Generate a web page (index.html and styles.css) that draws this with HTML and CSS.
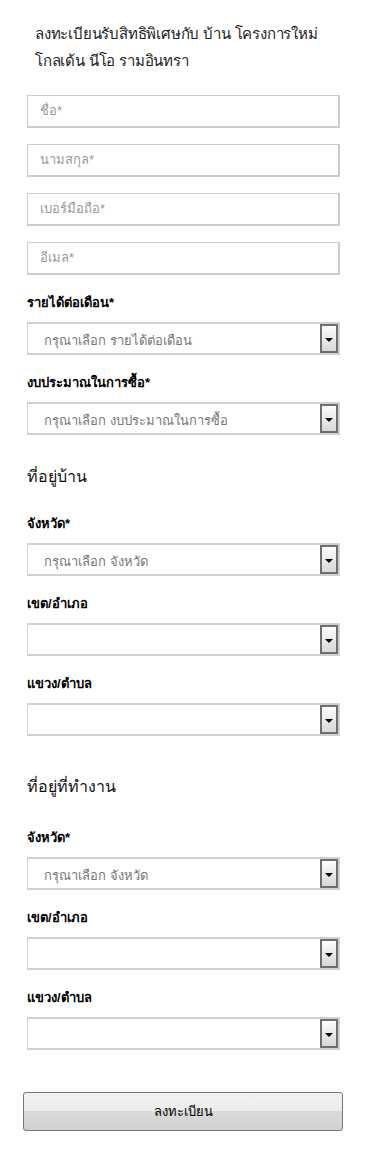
FILE: index.html
```html
<!DOCTYPE html>
<html>
<head>
<meta name="viewport" content="width=device-width, initial-scale=1">
<link rel="stylesheet" href="styles.css">
</head>
<body>

<div class="container">
  <h2 class="title">ลงทะเบียนรับสิทธิพิเศษกับ บ้าน โครงการใหม่ โกลเด้น นีโอ รามอินทรา</h2>

  <form>
    <div class="field"><div class="input">ชื่อ*</div></div>
    <div class="field"><div class="input">นามสกุล*</div></div>
    <div class="field"><div class="input">เบอร์มือถือ*</div></div>
    <div class="field"><div class="input">อีเมล*</div></div>

    <label class="label">รายได้ต่อเดือน*</label>
    <div class="select"><span class="value">กรุณาเลือก รายได้ต่อเดือน</span><span class="arrow"></span></div>

    <label class="label">งบประมาณในการซื้อ*</label>
    <div class="select"><span class="value">กรุณาเลือก งบประมาณในการซื้อ</span><span class="arrow"></span></div>

    <div class="section">
      <h3 class="heading">ที่อยู่บ้าน</h3>
      <label class="label">จังหวัด*</label>
      <div class="select"><span class="value">กรุณาเลือก จังหวัด</span><span class="arrow"></span></div>
      <label class="label">เขต/อำเภอ</label>
      <div class="select"><span class="value"></span><span class="arrow"></span></div>
      <label class="label">แขวง/ตำบล</label>
      <div class="select"><span class="value"></span><span class="arrow"></span></div>
    </div>

    <div class="section">
      <h3 class="heading">ที่อยู่ที่ทำงาน</h3>
      <label class="label">จังหวัด*</label>
      <div class="select"><span class="value">กรุณาเลือก จังหวัด</span><span class="arrow"></span></div>
      <label class="label">เขต/อำเภอ</label>
      <div class="select"><span class="value"></span><span class="arrow"></span></div>
      <label class="label">แขวง/ตำบล</label>
      <div class="select"><span class="value"></span><span class="arrow"></span></div>
    </div>

    <div class="submit">ลงทะเบียน</div>
  </form>
</div>

</body>
</html>
```

FILE: styles.css
```css
* {
  box-sizing: border-box;
}

body {
  margin: 0;
  font-family: "Liberation Sans", "Noto Sans", sans-serif;
  font-size: 13px;
  color: #000;
  background: #fff;
}

.container {
  padding: 20px 30px 0 27px;
}

.title {
  margin: 0 0 21px 8px;
  font-size: 15px;
  letter-spacing: -0.2px;
  font-weight: normal;
  line-height: 27px;
  color: #222;
}

.field {
  margin-bottom: 16px;
}

.input {
  height: 33px;
  border: 2px solid #ccc;
  border-width: 1px 2px 2px 1px;
  padding: 0 12px;
  line-height: 30px;
  color: #999;
}

.label {
  display: block;
  margin: 19px 0 10px;
  height: 18px;
  line-height: 18px;
  font-weight: bold;
}

.select {
  display: flex;
  height: 33px;
  border: 2px solid #d0d0d0;
  border-width: 2px 2px 2px 1px;
}

.select .value {
  flex: 1;
  padding: 1px 16px 0;
  line-height: 31px;
  color: #777;
}

.select .arrow {
  position: relative;
  width: 18px;
  border: 2px solid #6e6e6e;
  background: linear-gradient(#fdfdfd, #d8d8d8);
}

/* small black triangle */
.select .arrow:after {
  content: "";
  position: absolute;
  left: 3px;
  top: 12px;
  border-left: 4px solid transparent;
  border-right: 4px solid transparent;
  border-top: 4px solid #000;
}

.heading {
  margin: 30px 0 10px;
  height: 24px;
  line-height: 24px;
  font-size: 16px;
  font-weight: normal;
  color: #111;
}

.section + .section .heading {
  margin-top: 39px;
}

.section .heading + .label {
  margin-top: 26px;
}

.section + .section .heading + .label {
  margin-top: 30px;
}

.submit {
  margin: 42px -3px 0 -4px;
  height: 39px;
  border: 1px solid #777;
  border-radius: 3px;
  background: linear-gradient(#f2f2f2 0%, #ececec 50%, #dadada 50%, #d2d2d2 100%);
  text-align: center;
  line-height: 37px;
  cursor: pointer;
}
```
